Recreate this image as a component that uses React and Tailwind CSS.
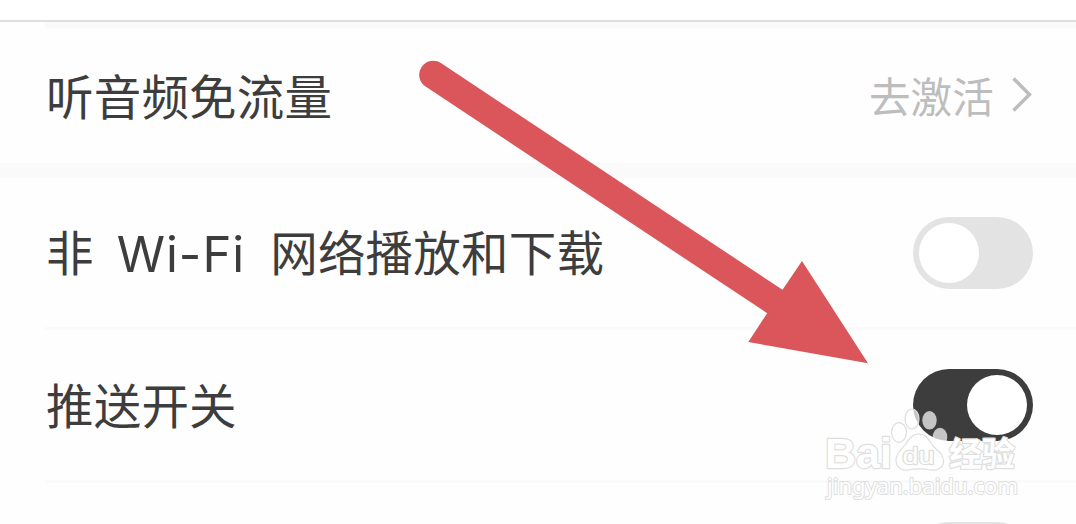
function Switch({ on }) {
  return (
    <button
      role="switch"
      aria-checked={on}
      className={`flex h-[72px] w-[120px] shrink-0 items-center rounded-full px-1.5 ${on ? "justify-end bg-[#3d3d3d]" : "justify-start bg-[#e3e3e3]"}`}
    >
      <span className="size-[60px] rounded-full bg-white" />
    </button>
  );
}

function Divider() {
  return <div className="ml-[45px] h-[3px] shrink-0 bg-[#fafafa]" />;
}

function Arrow() {
  return (
    <svg className="absolute left-0 top-0" width="1076" height="524" viewBox="0 0 1076 524" fill="#db565b">
      <path d="M440.9 63 L782.5 289.8 L802 261 L868 363.3 L748.3 342 L767.2 313.2 L425.6 86.6 A14 14 0 0 1 440.9 63 Z" />
    </svg>
  );
}

function Watermark() {
  return (
    <svg
      className="absolute left-0 top-0"
      width="1076"
      height="524"
      viewBox="0 0 1076 524"
      fill="#ffffff"
      stroke="#dedede"
      strokeLinejoin="round"
    >
      {/* paw */}
      <g fillOpacity="0.7" strokeWidth="1.2">
        <ellipse cx="899" cy="432.5" rx="7.5" ry="9.8" />
        <ellipse cx="912" cy="419" rx="7" ry="10" />
        <ellipse cx="929.5" cy="420.3" rx="7.2" ry="9.3" stroke="none" />
        <ellipse cx="940" cy="437" rx="7.3" ry="9.3" stroke="none" />
        <path d="M919 434 C926 434 929 440 933 446 C938 451 943.5 454 943.5 461 C943.5 468 937 471 930 470 C922 468.5 915 468.5 908 470 C900 471 896 466 896 460 C896 453 901 450 905 445 C909 439 912 434 919 434 Z" />
      </g>
      <g strokeWidth="2.4" paintOrder="stroke">
        <text x="902.5" y="464" fontSize="24" letterSpacing="0" fontFamily="'Liberation Sans', sans-serif" textLength="32" lengthAdjust="spacingAndGlyphs">du</text>
        <text x="825" y="468" fontSize="43" fontWeight="bold" letterSpacing="0" fontFamily="'Liberation Sans', sans-serif" textLength="67" lengthAdjust="spacingAndGlyphs">Bai</text>
        <text x="949" y="466" fontSize="33" fontWeight="700" letterSpacing="0" fontFamily="'Noto Sans CJK SC', sans-serif" textLength="66" lengthAdjust="spacingAndGlyphs">经验</text>
        <text x="827" y="494" fontSize="22" letterSpacing="0" fontFamily="'Noto Sans', sans-serif" strokeWidth="2" textLength="191" lengthAdjust="spacingAndGlyphs">jingyan.baidu.com</text>
      </g>
    </svg>
  );
}

export default function App() {
  return (
    <div className="relative flex h-[524px] w-[1076px] flex-col overflow-hidden bg-[#fefefe] font-['Noto_Sans_CJK_SC',sans-serif] text-[47.5px] leading-none tracking-[0.2px] text-[#3d3d3d]">
      {/* Header edge */}
      <div className="h-[22px] shrink-0 border-b-2 border-[#dfdfdf] bg-white" />
      <div className="ml-[45px] h-1.5 shrink-0 bg-[#fafafa]" />

      <div className="flex h-[135px] shrink-0 items-center justify-between pb-[3px] pl-[46px] pr-[44px]">
        <span className="pt-0.5">听音频免流量</span>
        <div className="flex items-center gap-[18px] text-[41.5px] text-[#bdbdbd]">
          <span className="pt-1">去激活</span>
          <svg width="20" height="35" viewBox="0 0 20 35" fill="none" stroke="currentColor" strokeWidth="3.5">
            <path d="M1.5 1.5 L17.5 17.5 L1.5 33.5" />
          </svg>
        </div>
      </div>

      <div className="h-[15px] shrink-0 bg-[#fafafa]" />

      <div className="flex h-[149px] shrink-0 items-center justify-between pl-[46px] pr-[43px]">
        <div className="flex items-center pb-[3px]">
          <span>非</span>
          <span className="ml-[23px] mt-1.5 font-[Inter,sans-serif] text-[49px] tracking-[1px]">Wi-Fi</span>
          <span className="ml-[25px]">网络播放和下载</span>
        </div>
        <Switch on={false} />
      </div>
      <Divider />

      <div className="flex h-[150px] shrink-0 items-center justify-between pl-[46px] pr-[43px]">
        <span className="pb-0.5">推送开关</span>
        <Switch on />
      </div>
      <Divider />

      <div className="flex h-[149px] shrink-0 items-center justify-end pr-[43px]">
        <Switch on={false} />
      </div>

      <Arrow />
      <Watermark />
    </div>
  );
}
